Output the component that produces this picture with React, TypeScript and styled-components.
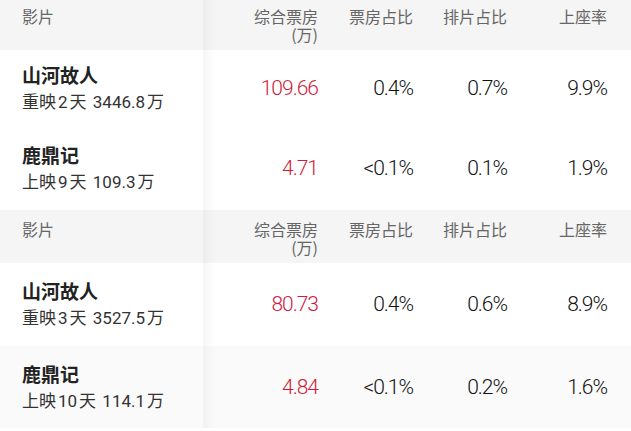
import React from 'react';
import styled, { createGlobalStyle } from 'styled-components';

interface Movie {
  name: string;
  status: string;
  days: string;
  total: string;
  boxOffice: string;
  boxRate: string;
  showRate: string;
  seatRate: string;
}

interface Block {
  rowPad: [number, number];
  shadedLast?: boolean;
  movies: Movie[];
}

const GlobalStyle = createGlobalStyle`
  html, body {
    margin: 0;
    padding: 0;
    background: #fff;
    overflow: hidden;
  }
  body {
    font-family: 'Noto Sans CJK SC', 'Noto Sans', sans-serif;
    -webkit-font-smoothing: antialiased;
  }
`;

const Page = styled.div`
  width: 631px;
  height: 431px;
  overflow: hidden;
  margin-top: -3px;
`;

const Grid = styled.div`
  display: grid;
  grid-template-columns: 203px 120px 95px 94px 119px;
`;

const HeaderRow = styled(Grid)`
  background: #f5f5f5;
  height: 53px;
  box-sizing: border-box;
  padding: 10px 0 7px;
`;

const HeaderCell = styled.div<{ $left?: boolean; $last?: boolean }>`
  font-size: 16px;
  line-height: 18px;
  color: #666;
  text-align: ${(p) => (p.$left ? 'left' : 'right')};
  padding-left: ${(p) => (p.$left ? '22px' : '0')};
  padding-right: ${(p) => (p.$left ? '0' : p.$last ? '24px' : '5px')};
  position: relative;
  height: 100%;
`;

const Row = styled(Grid)<{ $pad: [number, number]; $shaded?: boolean }>`
  background: ${(p) => (p.$shaded ? '#fafafa' : '#fff')};
  padding: ${(p) => `${p.$pad[0]}px 0 ${p.$pad[1]}px`};
  align-items: center;
`;

const NameCell = styled.div`
  padding-left: 22px;
  position: relative;
  align-self: stretch;
  display: flex;
  flex-direction: column;
  justify-content: center;
`;

const Shadow = styled.div`
  position: absolute;
  top: 0;
  bottom: 0;
  right: -12px;
  width: 12px;
  background: linear-gradient(to right, rgba(0, 0, 0, 0.035), rgba(0, 0, 0, 0));
  pointer-events: none;
`;

const HeaderShadow = styled(Shadow)`
  top: -10px;
  bottom: -7px;
`;

const RowShadow = styled(Shadow)<{ $pad: [number, number] }>`
  top: ${(p) => -p.$pad[0]}px;
  bottom: ${(p) => -p.$pad[1]}px;
`;

const Title = styled.div`
  font-size: 19px;
  line-height: 26px;
  font-weight: 700;
  color: #222;
`;

const Sub = styled.div`
  margin-top: 2px;
  font-family: 'Roboto', 'Noto Sans CJK SC', sans-serif;
  font-size: 17px;
  line-height: 24px;
  color: #333;
  white-space: nowrap;
`;

const Num = styled.span`
  margin: 0 2px;
`;

const Value = styled.div<{ $red?: boolean; $last?: boolean }>`
  font-family: 'Roboto', 'Liberation Sans', sans-serif;
  font-weight: 300;
  font-size: 21px;
  letter-spacing: -1px;
  line-height: 26px;
  color: ${(p) => (p.$red ? '#cf1b3c' : '#111')};
  text-align: right;
  padding-right: ${(p) => (p.$last ? '24px' : '5px')};
  white-space: nowrap;
`;

const blocks: Block[] = [
  {
    rowPad: [12, 16],
    movies: [
      { name: '山河故人', status: '重映', days: '2', total: '3446.8', boxOffice: '109.66', boxRate: '0.4%', showRate: '0.7%', seatRate: '9.9%' },
      { name: '鹿鼎记', status: '上映', days: '9', total: '109.3', boxOffice: '4.71', boxRate: '<0.1%', showRate: '0.1%', seatRate: '1.9%' },
    ],
  },
  {
    rowPad: [15, 16],
    shadedLast: true,
    movies: [
      { name: '山河故人', status: '重映', days: '3', total: '3527.5', boxOffice: '80.73', boxRate: '0.4%', showRate: '0.6%', seatRate: '8.9%' },
      { name: '鹿鼎记', status: '上映', days: '10', total: '114.1', boxOffice: '4.84', boxRate: '<0.1%', showRate: '0.2%', seatRate: '1.6%' },
    ],
  },
];

function Header() {
  return (
    <HeaderRow>
      <HeaderCell $left>
        影片
        <HeaderShadow />
      </HeaderCell>
      <HeaderCell>
        综合票房
        <br />
        (万)
      </HeaderCell>
      <HeaderCell>票房占比</HeaderCell>
      <HeaderCell>排片占比</HeaderCell>
      <HeaderCell $last>上座率</HeaderCell>
    </HeaderRow>
  );
}

export default function App(): JSX.Element {
  return (
    <>
      <GlobalStyle />
      <Page>
        {blocks.map((block, bi) => (
          <div key={bi}>
            <Header />
            {block.movies.map((m, i) => (
              <Row key={m.name} $pad={block.rowPad} $shaded={block.shadedLast && i === block.movies.length - 1}>
                <NameCell>
                  <Title>{m.name}</Title>
                  <Sub>
                    {m.status}
                    <Num>{m.days}</Num>天 <Num>{m.total}</Num>万
                  </Sub>
                  <RowShadow $pad={block.rowPad} />
                </NameCell>
                <Value $red>{m.boxOffice}</Value>
                <Value>{m.boxRate}</Value>
                <Value>{m.showRate}</Value>
                <Value $last>{m.seatRate}</Value>
              </Row>
            ))}
          </div>
        ))}
      </Page>
    </>
  );
}
